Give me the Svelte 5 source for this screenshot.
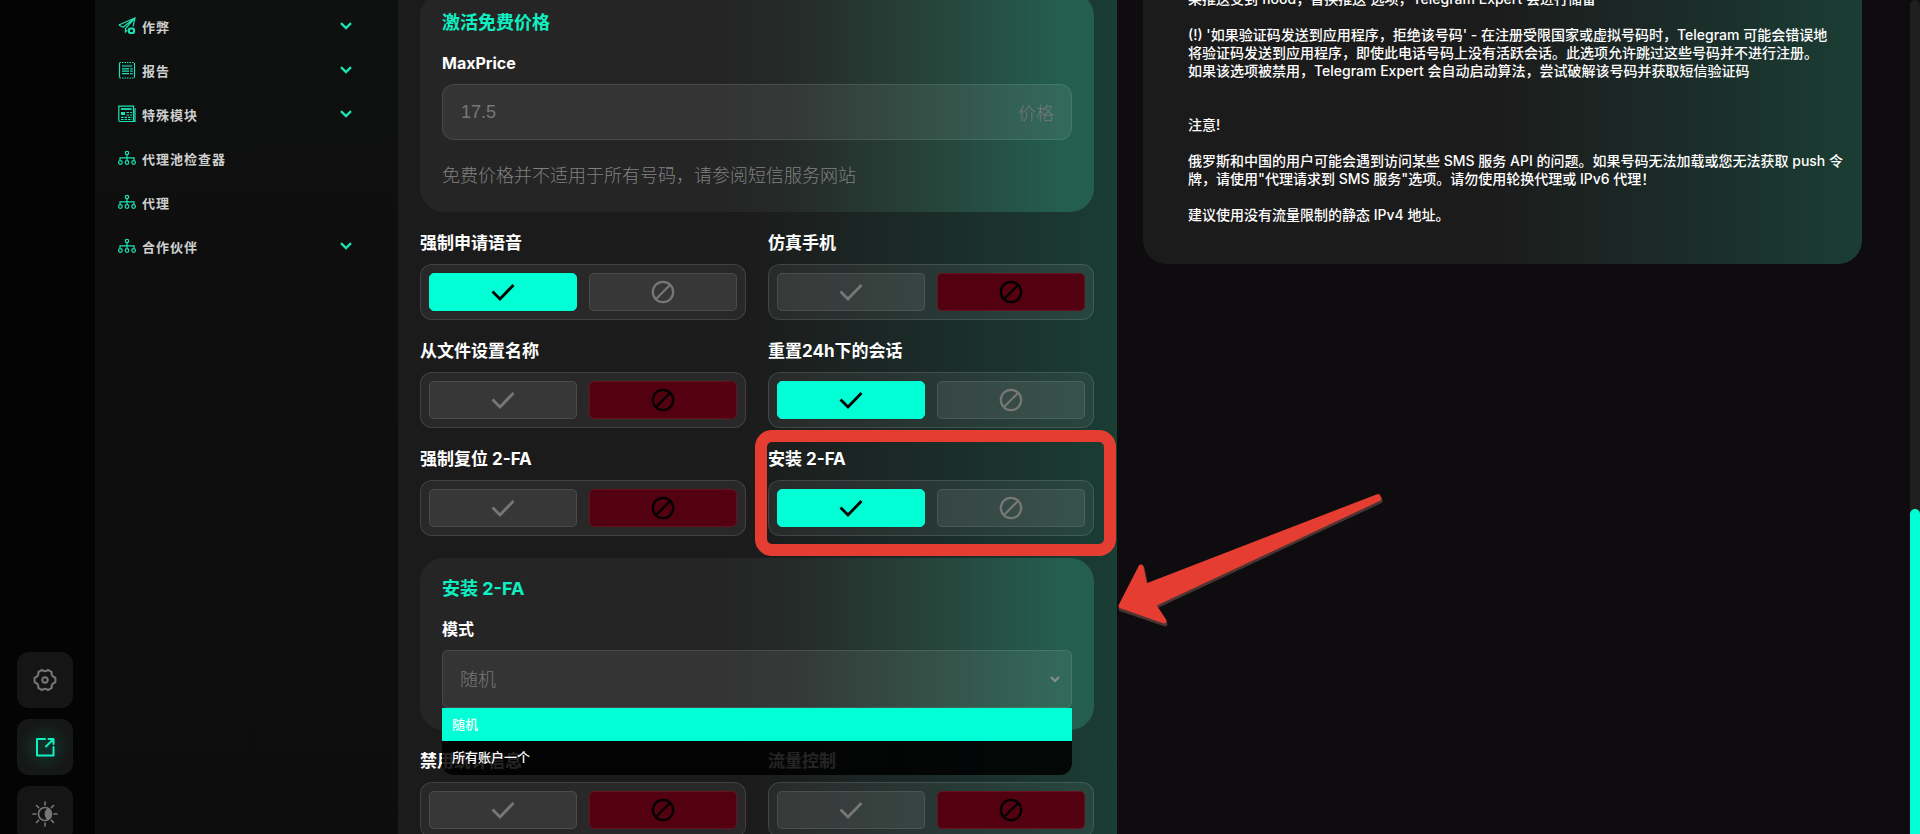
<script>
  const nav = [
    { icon: 'plane', label: '作弊', open: true },
    { icon: 'report', label: '报告', open: true },
    { icon: 'module', label: '特殊模块', open: true },
    { icon: 'tree', label: '代理池检查器', open: false },
    { icon: 'tree', label: '代理', open: false },
    { icon: 'tree', label: '合作伙伴', open: true },
  ];

  let upper = $state([
    { label: '强制申请语音', on: true },
    { label: '仿真手机', on: false },
    { label: '从文件设置名称', on: false },
    { label: '重置24h下的会话', on: true },
    { label: '强制复位 2-FA', on: false },
    { label: '安装 2-FA', on: true, marked: true },
  ]);

  let lower = $state([
    { label: '禁用统计信息', on: false },
    { label: '流量控制', on: false },
  ]);

  const modes = ['随机', '所有账户一个'];
  let mode = $state('随机');
  let price = $state('');
</script>

{#snippet toggle(item)}
  <div class="field" role="group" aria-label={item.label}>
    <span class="label">{item.label}</span>
    <div class="switch">
      <button class="opt" class:yes={item.on} aria-label="启用" aria-pressed={item.on} onclick={() => (item.on = true)}>
        <svg width="24" height="18" viewBox="0 0 24 18"><path d="M1.5 8.5 9 16 22.5 2" /></svg>
      </button>
      <button class="opt" class:no={!item.on} aria-label="停用" aria-pressed={!item.on} onclick={() => (item.on = false)}>
        <svg class="ban" width="24" height="24" viewBox="0 0 24 24"><circle cx="12" cy="12" r="10.2" /><path d="M5 19 19 5" /></svg>
      </button>
    </div>
    {#if item.marked}
      <div class="frame"></div>
      <svg class="arrow" width="266" height="134" viewBox="0 0 266 134">
        <path class="shade" d="M3 116 24 75 28 94 260 5 262 8 36 114 47 131Z" />
        <path class="body" d="M3 113 23 74 27 93.5 260 3.5 261 5.5 35 111.500 46 128Z" />
      </svg>
    {/if}
  </div>
{/snippet}

<div class="app">
  <aside class="rail">
    <button aria-label="设置">
      <svg width="24" height="24" viewBox="0 0 24 24" fill="none" stroke="#777" stroke-width="2" stroke-linejoin="round">
        <path d="M9.200 1.800C10.500 3.600 13.500 3.600 14.800 1.800L18.800 4.100C17.900 6.200 19.400 8.800 22.400 9.700V14.300C19.400 15.200 17.900 17.800 18.800 19.900L14.800 22.200C13.500 20.400 10.500 20.400 9.200 22.200L5.200 19.900C6.100 17.800 4.600 15.200 1.600 14.300V9.700C4.600 8.800 6.100 6.200 5.200 4.100Z" />
        <circle cx="12" cy="12" r="2.700" />
      </svg>
    </button>
    <button class="active" aria-label="打开">
      <svg width="20" height="20" viewBox="0 0 20 20" fill="none" stroke="#12f0c2" stroke-width="2" stroke-linecap="round" stroke-linejoin="round">
        <path d="M10 2H2V18.500H18.500V10M13.500 2H18.500V7M18 2.500 11 9.500" />
      </svg>
    </button>
    <button aria-label="主题">
      <svg width="26" height="26" viewBox="0 0 26 26" fill="none" stroke="#777" stroke-width="1.600" stroke-linecap="round">
        <circle cx="13" cy="13" r="6.500" />
        <path fill="#777" stroke="none" d="M16 7.200A6.500 6.500 0 0 1 16 18.800C11.500 17 11.500 9 16 7.200Z" />
        <path d="M13 1V4M13 22V25M1 13H4M22 13H25M4.500 4.500 6.600 6.600M19.400 19.400 21.500 21.500M21.500 4.500 19.400 6.600M6.600 19.400 4.500 21.500" />
      </svg>
    </button>
  </aside>

  <nav class="menu">
    {#each nav as item}
      <a href="#menu">
        <svg class="ico" width="18" height="18" viewBox="0 0 18 18">
          {#if item.icon === 'plane'}
            <path d="M.8 8 17 1 15 9.500M.8 8 5 10.200 17 1 7.500 11.500V15L9.500 12.800" />
            <rect x="11" y="11.500" width="5" height="4.500" rx="1.200" stroke-width="2.200" />
          {:else if item.icon === 'report'}
            <path d="M1.500 2V16.500M16.500 2V16.500" />
            <path stroke-dasharray="1.500 1" d="M1.500 1.500H16.500M1.500 17H16.500" />
            <path stroke-width="2.200" opacity=".55" d="M4 5H14" />
            <path stroke-dasharray="7 1.200 2.500 20" d="M4 7.800H15M4 10.200H15M4 12.600H15" />
          {:else if item.icon === 'module'}
            <path d="M15.500 16.500H2Q.8 16.500.8 15V1.200H15.500V16.500H17V3" />
            <path stroke-width="1.800" d="M3 4H13.500" />
            <path stroke-width="3" d="M3 8.500H7" />
            <path stroke-dasharray="2.500 1" d="M8.500 7.500H14M8.500 10H14M3 12.300H14M3 14.500H14" />
          {:else}
            <circle cx="9" cy="4" r="1.700" /><path d="M9 6V11M2 11V8.800H16V11" />
            <circle cx="2.400" cy="13.500" r="1.800" /><circle cx="9" cy="13.500" r="1.800" /><circle cx="15.600" cy="13.500" r="1.800" />
          {/if}
        </svg>
        <span>{item.label}</span>
        {#if item.open}
          <svg class="chev" width="12" height="8" viewBox="0 0 12 8"><path d="M1 1.200 6 6 11 1.200" /></svg>
        {/if}
      </a>
    {/each}
  </nav>

  <main>
    <section class="panel settings">
      <div class="card">
        <h2>激活免费价格</h2>
        <label class="label" for="price">MaxPrice</label>
        <div class="input">
          <input id="price" placeholder="17.5" bind:value={price} />
          <span>价格</span>
        </div>
        <p class="hint">免费价格并不适用于所有号码，请参阅短信服务网站</p>
      </div>

      <div class="grid">
        {#each upper as item}{@render toggle(item)}{/each}
      </div>

      <div class="card">
        <h2>安装 2-FA</h2>
        <label class="label" for="mode">模式</label>
        <div class="picker">
          <select id="mode" bind:value={mode}>
            {#each modes as m}<option>{m}</option>{/each}
          </select>
          <svg class="caret" width="10" height="7" viewBox="0 0 10 7"><path d="M1 1 5 5 9 1" /></svg>
          <ul>
            {#each modes as m}<li class:chosen={m === mode}>{m}</li>{/each}
          </ul>
        </div>
      </div>

      <div class="grid">
        {#each lower as item}{@render toggle(item)}{/each}
      </div>
    </section>

    <article class="panel notes">
      <p>果推送受到 flood，替换推送'选项，Telegram Expert 会进行储备</p>
      <p>(!) '如果验证码发送到应用程序，拒绝该号码' - 在注册受限国家或虚拟号码时，Telegram 可能会错误地<br />将验证码发送到应用程序，即使此电话号码上没有活跃会话。此选项允许跳过这些号码并不进行注册。<br />如果该选项被禁用，Telegram Expert 会自动启动算法，尝试破解该号码并获取短信验证码</p>
      <p class="notice">注意!</p>
      <p>俄罗斯和中国的用户可能会遇到访问某些 SMS 服务 API 的问题。如果号码无法加载或您无法获取 push 令<br />牌，请使用"代理请求到 SMS 服务"选项。请勿使用轮换代理或 IPv6 代理！</p>
      <p>建议使用没有流量限制的静态 IPv4 地址。</p>
    </article>
  </main>

  <div class="track"><div class="thumb"></div></div>
</div>

<style>
  :global(body) {
    background: #0e0c0e;
  }
  .app {
    display: grid;
    grid-template-columns: 95px 303px 1fr 10px;
    height: 100vh;
    overflow: hidden;
    color: #fff;
    font-family: Inter, 'Noto Sans CJK SC', sans-serif;
  }
  .app * {
    box-sizing: border-box;
  }
  button {
    font: inherit;
    cursor: pointer;
    padding: 0;
  }

  .rail {
    display: flex;
    flex-direction: column;
    justify-content: flex-end;
    gap: 11px;
    padding-left: 17px;
    margin-bottom: -8px;
    background: #040404;
  }
  .rail button {
    display: grid;
    place-items: center;
    flex: none;
    width: 56px;
    height: 56px;
    border: 0;
    border-radius: 12px;
    background: #151515;
  }
  .rail .active {
    background: radial-gradient(circle, #123029 10%, #161817 60%);
  }

  .menu {
    padding: 4px 46px 0 23px;
    background: linear-gradient(#0e1110, #0e0e0e 30%, #0d0d0d);
  }
  .menu a {
    display: flex;
    align-items: center;
    gap: 6px;
    height: 44px;
    color: #cfcfcf;
    font-size: 13px;
    font-weight: 700;
    letter-spacing: 1px;
    text-decoration: none;
  }
  .menu svg {
    fill: none;
    stroke: #1de3b4;
    stroke-width: 1.2;
    flex: none;
  }
  .menu .chev {
    margin-left: auto;
    stroke-width: 2.4;
  }

  main {
    display: grid;
    grid-template-columns: 1fr 1fr;
    align-items: start;
    gap: 26px;
    padding-right: 48px;
    min-height: 0;
  }
  .panel {
    background: linear-gradient(90deg, #1c1b1b 48%, #1b2a27 72%, #1a3d34);
  }
  .settings {
    position: relative;
    z-index: 1;
    display: flex;
    flex-direction: column;
    gap: 22px;
    margin-top: -30px;
    padding: 22px 23px 22px 22px;
  }
  .card {
    padding: 22px;
    border-radius: 24px;
    background: linear-gradient(90deg, #252525 45%, #252c29 57%, #26443a 76%, #235e4f 95%);
  }
  h2 {
    margin: 0 0 22px;
    color: #0ff0c2;
    font-size: 18px;
    font-weight: 700;
    line-height: 18px;
  }
  .label {
    display: block;
    margin-bottom: 12px;
    font-size: 17px;
    font-weight: 700;
    line-height: 18px;
  }
  label.label {
    font-size: 16px;
  }
  .input {
    display: flex;
    align-items: center;
    height: 56px;
    padding: 0 17px 0 18px;
    border: 1px solid rgba(255, 255, 255, 0.1);
    border-radius: 12px;
    background: rgba(255, 255, 255, 0.07);
    color: #777;
    font-size: 18px;
  }
  input {
    flex: 1;
    min-width: 0;
    padding: 0;
    border: 0;
    outline: 0;
    background: none;
    color: #777;
    font-family: 'Liberation Sans', sans-serif;
    font-size: 18px;
  }
  input::placeholder {
    color: #777;
  }
  .hint {
    margin: 26px 0 4px;
    color: #808080;
    font-size: 18px;
    font-weight: 300;
    line-height: 20px;
  }
  .input span,
  select {
    font-weight: 300;
  }

  .grid {
    display: grid;
    grid-template-columns: 1fr 1fr;
    gap: 22px;
  }
  .field {
    position: relative;
  }
  .switch {
    display: grid;
    grid-template-columns: 1fr 1fr;
    gap: 12px;
    height: 56px;
    padding: 8px;
    border: 1px solid rgba(255, 255, 255, 0.12);
    border-radius: 12px;
    background: rgba(255, 255, 255, 0.06);
  }
  .opt {
    display: grid;
    place-items: center;
    border: 1px solid rgba(255, 255, 255, 0.1);
    border-radius: 5px;
    background: rgba(255, 255, 255, 0.07);
  }
  .opt svg {
    fill: none;
    stroke: #777;
    stroke-width: 2.8;
  }
  .opt .ban {
    stroke-width: 2.2;
  }
  .opt.yes {
    border-color: #00ffd5;
    background: #00ffd5;
  }
  .opt.no {
    border-color: #65131f;
    background: #530010;
  }
  .opt.yes svg,
  .opt.no svg {
    stroke: #000;
  }

  .frame {
    position: absolute;
    inset: -20px -22px -20px -13px;
    border: 12px solid #e63d32;
    border-radius: 17px;
    pointer-events: none;
  }
  .arrow {
    position: absolute;
    top: 43px;
    left: calc(100% + 24px);
    stroke-width: 5;
    stroke-linejoin: round;
    pointer-events: none;
  }
  .arrow .body {
    fill: #e63d32;
    stroke: #e63d32;
  }
  .arrow .shade {
    fill: #4a3533;
    stroke: #4a3533;
  }

  .picker {
    position: relative;
    z-index: 2;
  }
  select {
    display: block;
    appearance: none;
    width: 100%;
    height: 58px;
    padding: 0 40px 0 17px;
    border: 1px solid rgba(255, 255, 255, 0.1);
    border-radius: 6px;
    outline: 0;
    background: rgba(255, 255, 255, 0.07);
    color: #777;
    font-family: inherit;
    font-size: 18px;
  }
  .caret {
    position: absolute;
    top: 26px;
    right: 12px;
    fill: none;
    stroke: #8b8f8e;
    stroke-width: 2;
    pointer-events: none;
  }
  ul {
    position: absolute;
    top: 100%;
    left: 0;
    right: 0;
    margin: 0;
    padding: 0;
    overflow: hidden;
    border-radius: 0 0 12px 12px;
    background: rgba(0, 0, 0, 0.86);
    list-style: none;
  }
  li {
    height: 34px;
    padding-left: 10px;
    font-size: 13px;
    font-weight: 500;
    line-height: 32px;
  }
  .chosen {
    height: 33px;
    background: #00ffd5;
  }

  .notes {
    margin-top: -50px;
    padding: 40px 16px 40px 45px;
    border-radius: 24px;
    font-size: 14px;
    font-weight: 500;
    line-height: 18px;
    white-space: nowrap;
  }
  .notes p {
    margin: 0 0 18px;
  }
  .notes p:last-child {
    margin: 0;
  }
  .notes .notice {
    margin-top: 36px;
  }

  .track {
    display: flex;
    align-items: flex-end;
    border-radius: 5px 5px 0 0;
    background: #1f1f1f;
  }
  .thumb {
    width: 100%;
    height: 39%;
    border-radius: 5px 5px 0 0;
    background: #00ffd5;
  }
</style>
